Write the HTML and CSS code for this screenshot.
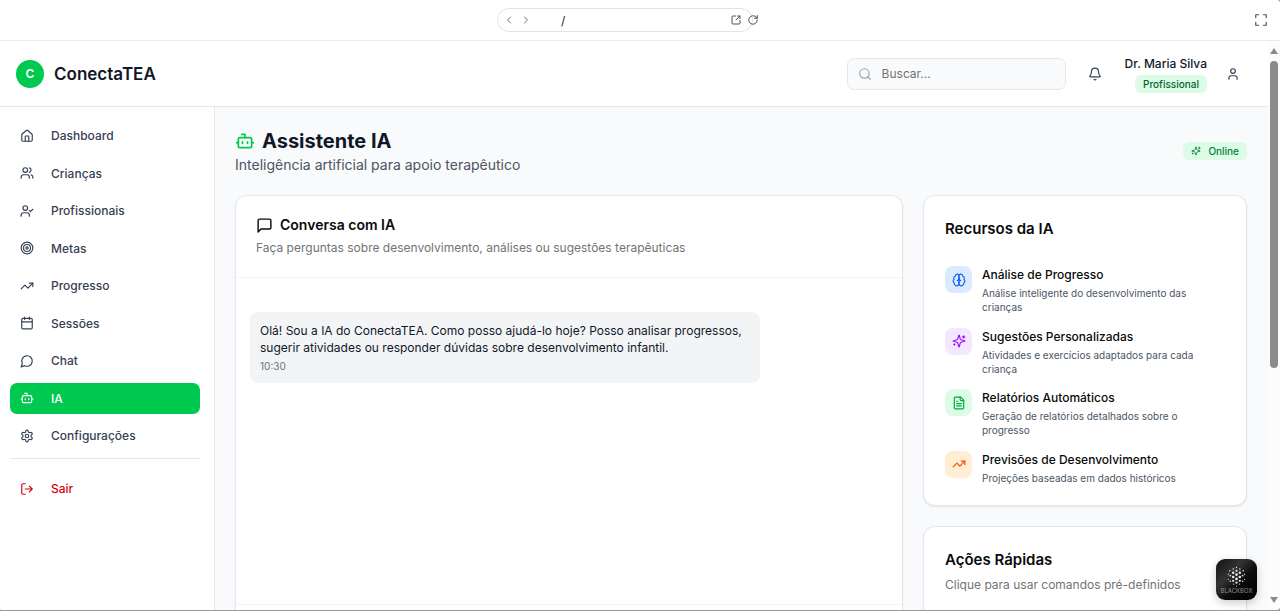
FILE: index.html
```html
<!DOCTYPE html>
<html lang="pt-BR">
<head>
<meta charset="utf-8">
<meta name="viewport" content="width=device-width, initial-scale=1">
<title>ConectaTEA - Assistente IA</title>
<link rel="stylesheet" href="styles.css">
</head>
<body>
<svg class="sprite" aria-hidden="true">
  <symbol id="bot" viewBox="0 0 24 24"><path d="M12 8V4H8"/><rect width="16" height="12" x="4" y="8" rx="2"/><path d="M2 14h2M20 14h2M15 13v2M9 13v2"/></symbol>
  <symbol id="sparkles" viewBox="0 0 24 24"><path d="M9.937 15.5A2 2 0 0 0 8.5 14.063l-6.135-1.582a.5.5 0 0 1 0-.962L8.5 9.936A2 2 0 0 0 9.937 8.5l1.582-6.135a.5.5 0 0 1 .963 0L14.063 8.5A2 2 0 0 0 15.5 9.937l6.135 1.581a.5.5 0 0 1 0 .964L15.5 14.063a2 2 0 0 0-1.437 1.437l-1.582 6.135a.5.5 0 0 1-.963 0z"/><path d="M20 3v4M22 5h-4M4 17v2M5 18H3"/></symbol>
  <symbol id="trend" viewBox="0 0 24 24"><path d="M16 7h6v6"/><path d="m22 7-8.5 8.5-5-5L2 17"/></symbol>
</svg>
<div class="window">
  <div class="toolbar">
    <div class="address">
      <button class="tool faint" aria-label="Voltar"><svg class="icon" viewBox="0 0 24 24"><path d="m15 18-6-6 6-6"/></svg></button>
      <button class="tool faint" aria-label="Avançar"><svg class="icon" viewBox="0 0 24 24"><path d="m9 18 6-6-6-6"/></svg></button>
      <input class="path" type="text" value="/" aria-label="Endereço">
      <button class="tool" aria-label="Abrir em nova aba"><svg class="icon" viewBox="0 0 24 24"><path d="M11 4H6a2 2 0 0 0-2 2v12a2 2 0 0 0 2 2h12a2 2 0 0 0 2-2v-5M15 4h5v5M20 4l-8 8"/></svg></button>
      <button class="tool" aria-label="Recarregar"><svg class="icon" viewBox="0 0 24 24"><path d="M20.500 12a8.500 8.500 0 1 1-2.500-6l2.500 2.500"/><path d="M20.500 3v5.500H15"/></svg></button>
    </div>
    <button class="tool expand" aria-label="Tela cheia"><svg class="icon" viewBox="0 0 24 24"><path d="M3 8V3h5M16 3h5v5M21 16v5h-5M8 21H3v-5"/></svg></button>
  </div>
  <div class="viewport">
    <div class="app">
      <header class="header">
        <div class="brand"><span class="brand-mark">C</span><span class="brand-name">ConectaTEA</span></div>
        <div class="header-tools">
          <label class="search">
            <svg class="icon" viewBox="0 0 24 24" aria-hidden="true"><circle cx="11" cy="11" r="8"/><path d="m21 21-4.300-4.300"/></svg>
            <input type="text" placeholder="Buscar..." aria-label="Buscar">
          </label>
          <button class="icon-button" aria-label="Notificações"><svg class="icon" viewBox="0 0 24 24"><path d="M10.268 21a2 2 0 0 0 3.464 0"/><path d="M3.262 15.326A1 1 0 0 0 4 17h16a1 1 0 0 0 .740-1.673C19.410 13.956 18 12.499 18 8A6 6 0 0 0 6 8c0 4.499-1.411 5.956-2.738 7.326"/></svg></button>
          <div class="user">
            <div class="user-info"><span class="user-name">Dr. Maria Silva</span><span class="badge">Profissional</span></div>
            <button class="icon-button" aria-label="Perfil"><svg class="icon" viewBox="0 0 24 24"><path d="M19 21v-2a4 4 0 0 0-4-4H9a4 4 0 0 0-4 4v2"/><circle cx="12" cy="7" r="4"/></svg></button>
          </div>
        </div>
      </header>
      <div class="body">
        <nav class="sidebar" aria-label="Principal">
          <ul class="nav">
            <li><a class="nav-link" href="#"><svg class="icon" viewBox="0 0 24 24"><path d="M15 21v-8a1 1 0 0 0-1-1h-4a1 1 0 0 0-1 1v8"/><path d="M3 10a2 2 0 0 1 .709-1.528l7-5.999a2 2 0 0 1 2.582 0l7 5.999A2 2 0 0 1 21 10v9a2 2 0 0 1-2 2H5a2 2 0 0 1-2-2z"/></svg>Dashboard</a></li>
            <li><a class="nav-link" href="#"><svg class="icon" viewBox="0 0 24 24"><path d="M16 21v-2a4 4 0 0 0-4-4H6a4 4 0 0 0-4 4v2"/><circle cx="9" cy="7" r="4"/><path d="M22 21v-2a4 4 0 0 0-3-3.870M16 3.130a4 4 0 0 1 0 7.750"/></svg>Crianças</a></li>
            <li><a class="nav-link" href="#"><svg class="icon" viewBox="0 0 24 24"><path d="m16 11 2 2 4-4M16 21v-2a4 4 0 0 0-4-4H6a4 4 0 0 0-4 4v2"/><circle cx="9" cy="7" r="4"/></svg>Profissionais</a></li>
            <li><a class="nav-link" href="#"><svg class="icon" viewBox="0 0 24 24"><circle cx="12" cy="12" r="10"/><circle cx="12" cy="12" r="6"/><circle cx="12" cy="12" r="2"/></svg>Metas</a></li>
            <li><a class="nav-link" href="#"><svg class="icon"><use href="#trend"/></svg>Progresso</a></li>
            <li><a class="nav-link" href="#"><svg class="icon" viewBox="0 0 24 24"><path d="M8 2v4M16 2v4M3 10h18"/><rect width="18" height="18" x="3" y="4" rx="2"/></svg>Sessões</a></li>
            <li><a class="nav-link" href="#"><svg class="icon" viewBox="0 0 24 24"><path d="M7.900 20A9 9 0 1 0 4 16.100L2 22Z"/></svg>Chat</a></li>
            <li><a class="nav-link active" href="#" aria-current="page"><svg class="icon"><use href="#bot"/></svg>IA</a></li>
            <li><a class="nav-link" href="#"><svg class="icon" viewBox="0 0 24 24"><path d="M12.220 2h-.440a2 2 0 0 0-2 2v.180a2 2 0 0 1-1 1.730l-.430.250a2 2 0 0 1-2 0l-.150-.080a2 2 0 0 0-2.730.730l-.220.380a2 2 0 0 0 .730 2.730l.150.100a2 2 0 0 1 1 1.720v.510a2 2 0 0 1-1 1.740l-.150.090a2 2 0 0 0-.730 2.730l.220.380a2 2 0 0 0 2.730.730l.150-.080a2 2 0 0 1 2 0l.430.250a2 2 0 0 1 1 1.730V20a2 2 0 0 0 2 2h.440a2 2 0 0 0 2-2v-.180a2 2 0 0 1 1-1.730l.430-.250a2 2 0 0 1 2 0l.150.080a2 2 0 0 0 2.730-.730l.220-.390a2 2 0 0 0-.730-2.730l-.150-.080a2 2 0 0 1-1-1.740v-.500a2 2 0 0 1 1-1.740l.150-.090a2 2 0 0 0 .730-2.730l-.220-.380a2 2 0 0 0-2.730-.730l-.150.080a2 2 0 0 1-2 0l-.430-.250a2 2 0 0 1-1-1.730V4a2 2 0 0 0-2-2z"/><circle cx="12" cy="12" r="3"/></svg>Configurações</a></li>
          </ul>
          <div class="nav-footer">
            <button class="nav-link logout"><svg class="icon" viewBox="0 0 24 24"><path d="M9 21H5a2 2 0 0 1-2-2V5a2 2 0 0 1 2-2h4M16 17l5-5-5-5M21 12H9"/></svg>Sair</button>
          </div>
        </nav>
        <main class="main">
          <div class="page-head">
            <div>
              <h1 class="page-title"><svg class="icon"><use href="#bot"/></svg>Assistente IA</h1>
              <p class="page-subtitle">Inteligência artificial para apoio terapêutico</p>
            </div>
            <span class="badge online"><svg class="icon"><use href="#sparkles"/></svg>Online</span>
          </div>
          <div class="columns">
            <section class="card chat">
              <div class="chat-head">
                <h2 class="chat-title"><svg class="icon" viewBox="0 0 24 24"><path d="M21 15a2 2 0 0 1-2 2H7l-4 4V5a2 2 0 0 1 2-2h14a2 2 0 0 1 2 2z"/></svg>Conversa com IA</h2>
                <p class="chat-desc">Faça perguntas sobre desenvolvimento, análises ou sugestões terapêuticas</p>
              </div>
              <div class="messages">
                <div class="message">
                  <p class="message-text">Olá! Sou a IA do ConectaTEA. Como posso ajudá-lo hoje? Posso analisar progressos, sugerir atividades ou responder dúvidas sobre desenvolvimento infantil.</p>
                  <time class="message-time">10:30</time>
                </div>
              </div>
              <div class="composer"></div>
            </section>
            <div class="side">
              <section class="card side-card">
                <h2 class="card-title">Recursos da IA</h2>
                <ul class="features">
                  <li class="feature"><span class="tile blue"><svg class="icon" viewBox="0 0 24 24"><path d="M12 5a3 3 0 1 0-5.997.125 4 4 0 0 0-2.526 5.770 4 4 0 0 0 .556 6.588A4 4 0 1 0 12 18Z"/><path d="M12 5a3 3 0 1 1 5.997.125 4 4 0 0 1 2.526 5.770 4 4 0 0 1-.556 6.588A4 4 0 1 1 12 18Z"/><path d="M15 13a4.500 4.500 0 0 1-3-4 4.500 4.500 0 0 1-3 4"/></svg></span><div><h3 class="feature-title">Análise de Progresso</h3><p class="feature-text">Análise inteligente do desenvolvimento das crianças</p></div></li>
                  <li class="feature"><span class="tile purple"><svg class="icon"><use href="#sparkles"/></svg></span><div><h3 class="feature-title">Sugestões Personalizadas</h3><p class="feature-text">Atividades e exercícios adaptados para cada criança</p></div></li>
                  <li class="feature"><span class="tile green"><svg class="icon" viewBox="0 0 24 24"><path d="M15 2H6a2 2 0 0 0-2 2v16a2 2 0 0 0 2 2h12a2 2 0 0 0 2-2V7Z"/><path d="M14 2v4a2 2 0 0 0 2 2h4M10 9H8M16 13H8M16 17H8"/></svg></span><div><h3 class="feature-title">Relatórios Automáticos</h3><p class="feature-text">Geração de relatórios detalhados sobre o progresso</p></div></li>
                  <li class="feature"><span class="tile orange"><svg class="icon"><use href="#trend"/></svg></span><div><h3 class="feature-title">Previsões de Desenvolvimento</h3><p class="feature-text">Projeções baseadas em dados históricos</p></div></li>
                </ul>
              </section>
              <section class="card side-card">
                <h2 class="card-title">Ações Rápidas</h2>
                <p class="card-desc">Clique para usar comandos pré-definidos</p>
              </section>
            </div>
          </div>
        </main>
      </div>
    </div>
    <div class="scrollbar" aria-hidden="true">
      <svg class="arrow" viewBox="0 0 10 8"><path d="M5 1 9 7H1z"/></svg>
      <div class="track"><div class="thumb"></div></div>
      <svg class="arrow" viewBox="0 0 10 8"><path d="M5 7 1 1h8z"/></svg>
    </div>
    <button class="blackbox">
      <svg class="dots" viewBox="0 0 20 22" aria-hidden="true">
        <g><circle cx="10" cy="1.500" r=".7"/><circle cx="6.500" cy="3" r=".8"/><circle cx="13.500" cy="3" r=".8"/><circle cx="3" cy="5" r=".8"/><circle cx="10" cy="5" r="1.200"/><circle cx="17" cy="5" r=".8"/><circle cx="6.500" cy="7" r="1.300"/><circle cx="13.500" cy="7" r="1.300"/><circle cx="1.500" cy="8.500" r=".6"/><circle cx="10" cy="9" r="1.500"/><circle cx="18.500" cy="8.500" r=".6"/><circle cx="3.500" cy="10" r=".9"/><circle cx="16.500" cy="10" r=".9"/><circle cx="6.500" cy="11.500" r="1.400"/><circle cx="13.500" cy="11.500" r="1.400"/><circle cx="10" cy="13.500" r="1.500"/><circle cx="1.500" cy="14" r=".6"/><circle cx="18.500" cy="14" r=".6"/><circle cx="3.500" cy="16" r=".8"/><circle cx="16.500" cy="16" r=".8"/><circle cx="6.500" cy="15.500" r="1.200"/><circle cx="13.500" cy="15.500" r="1.200"/><circle cx="10" cy="17.500" r="1.200"/><circle cx="7" cy="19" r=".7"/><circle cx="13" cy="19" r=".7"/><circle cx="10" cy="21" r=".6"/></g>
      </svg>
      <span>BLACKBOX</span>
    </button>
  </div>
</div>
</body>
</html>
```
FILE: styles.css
```css
* { box-sizing: border-box; }
body {
  margin: 0;
  height: 100vh;
  padding-bottom: 1px;
  background: #9b9b9b;
  font-family: Inter, "Liberation Sans", sans-serif;
  font-size: 12px;
  color: #0a0a0a;
}
h1, h2, h3, p, ul { margin: 0; padding: 0; font-weight: 400; }
ul { list-style: none; }
button { font: inherit; border: 0; padding: 0; background: none; color: inherit; cursor: pointer; }
a { color: inherit; text-decoration: none; }
.sprite { position: absolute; width: 0; height: 0; }
.icon {
  width: 14px;
  height: 14px;
  flex: none;
  fill: none;
  stroke: currentColor;
  stroke-width: 2;
  stroke-linecap: round;
  stroke-linejoin: round;
}

.window {
  height: 100%;
  display: flex;
  flex-direction: column;
  overflow: hidden;
  background: #fff;
  border-radius: 0 3px 4px 2px;
}
.toolbar {
  flex: none;
  height: 41px;
  display: flex;
  gap: 4px;
  align-items: center;
  padding-right: 12px;
  border-bottom: 1px solid #ebebec;
}
.address {
  width: 256px;
  height: 24px;
  display: flex;
  align-items: center;
  gap: 5px;
  margin: 0 auto;
  padding-left: 5px;
  border: 1px solid #e4e4e7;
  border-radius: 12px;
}
.tool { display: flex; flex: none; color: #52525b; }
.tool .icon { width: 12px; height: 12px; }
.tool.faint { color: #71717a; }
.path {
  flex: 0 0 188px;
  min-width: 0;
  padding: 0 0 0 24px;
  border: 0;
  background: none;
  font: 12px Inter, sans-serif;
  color: #27272a;
}
.tool.expand .icon { width: 14px; height: 14px; }

.viewport { flex: 1; min-height: 0; display: flex; position: relative; }
.app { flex: 1; min-width: 0; display: flex; flex-direction: column; overflow: hidden; background: #f9fafb; }
.scrollbar {
  width: 12px;
  flex: none;
  display: flex;
  flex-direction: column;
  align-items: center;
  gap: 6px;
  padding: 6px 0;
  background: #fcfcfc;
}
.arrow { width: 10px; height: 8px; fill: #8b8b8b; }
.track { flex: 1; width: 8px; }
.thumb { height: 58%; border-radius: 4px; background: #8b8b8b; }

.header {
  flex: none;
  height: 66px;
  display: flex;
  align-items: center;
  justify-content: space-between;
  padding: 0 20px 0 16px;
  background: #fff;
  border-bottom: 1px solid #e5e7eb;
}
.brand { display: flex; align-items: center; gap: 10px; }
.brand-mark {
  width: 28px;
  height: 28px;
  display: grid;
  place-items: center;
  border-radius: 50%;
  background: #00c950;
  color: #fff;
  font-weight: 600;
}
.brand-name { font-size: 17px; font-weight: 600; color: #101828; }
.header-tools { display: flex; align-items: center; gap: 14px; }
.search {
  width: 219px;
  height: 32px;
  display: flex;
  align-items: center;
  gap: 10px;
  padding: 0 10px;
  border: 1px solid #e5e7eb;
  border-radius: 7px;
  background: #f9fafb;
  color: #99a1af;
}
.search input { flex: 1; min-width: 0; border: 0; padding: 0; outline: 0; background: none; font: 12px Inter, sans-serif; }
.search input::placeholder { color: #737373; }
.icon-button { width: 31px; height: 31px; display: grid; place-items: center; color: #364153; }
.user { display: flex; align-items: center; gap: 10px; }
.user-info { display: flex; flex-direction: column; align-items: flex-end; gap: 2px; }
.user-name { font-weight: 500; line-height: 18px; color: #101828; }
.badge {
  display: inline-flex;
  align-items: center;
  gap: 7px;
  padding: 0 8px;
  border-radius: 6px;
  background: #dcfce7;
  color: #016630;
  font-size: 10px;
  font-weight: 500;
  line-height: 18px;
}
.badge .icon { width: 10px; height: 10px; }
.badge.online { color: #008236; }

.body { flex: 1; min-height: 0; display: flex; }
.sidebar { width: 215px; flex: none; padding: 13px 14px 0 10px; background: #fff; border-right: 1px solid #e5e7eb; }
.nav { height: 331px; display: flex; flex-direction: column; justify-content: space-between; }
.nav-link {
  width: 100%;
  height: 31px;
  display: flex;
  align-items: center;
  gap: 17px;
  padding: 0 10px;
  border-radius: 7px;
  font-weight: 500;
  color: #364153;
}
.nav-link.active { background: #00c950; color: #fff; }
.nav-footer { margin-top: 7px; padding-top: 14px; border-top: 1px solid #e5e7eb; }
.nav-link.logout { color: #d8000f; }

.main { flex: 1; min-width: 0; display: flex; flex-direction: column; gap: 20px; padding: 20px 21px 0 20px; overflow: hidden; }
.page-head { display: flex; align-items: center; justify-content: space-between; }
.page-title { display: flex; align-items: center; gap: 7px; font-size: 20px; font-weight: 700; line-height: 28px; color: #101828; }
.page-title .icon { width: 20px; height: 20px; color: #00c950; }
.page-subtitle { font-size: 14px; line-height: 20px; color: #4a5565; }

.columns { display: grid; grid-template-columns: repeat(3, minmax(0, 1fr)); gap: 20px; align-items: start; }
.card {
  background: #fff;
  border: 1px solid #e5e7eb;
  border-radius: 12px;
  box-shadow: 0 1px 2px rgba(0, 0, 0, .1);
}
.chat { grid-column: span 2; }
.chat-head { padding: 19px 20px 20px; border-bottom: 1px solid #f3f4f6; }
.chat-title { display: flex; align-items: center; gap: 7px; font-size: 14px; font-weight: 600; line-height: 20px; }
.chat-title .icon { width: 17px; height: 17px; }
.chat-desc { margin-top: 4px; line-height: 18px; color: #737373; }
.messages { height: 326px; padding: 34px 14px 0; }
.message { max-width: 80%; padding: 10px; border-radius: 8px; background: #f3f4f6; color: #101828; }
.message-text { line-height: 17px; }
.message-time { display: block; margin-top: 3px; font-size: 10px; line-height: 14px; color: #6a7282; }
.composer { height: 60px; border-top: 1px solid #f3f4f6; }

.side { display: flex; flex-direction: column; gap: 20px; }
.side-card { padding: 20px 21px; }
.card-title { font-size: 15px; font-weight: 600; line-height: 25px; }
.card-desc { font-size: 12px; line-height: 26px; color: #737373; }
.features { height: 219px; display: flex; flex-direction: column; justify-content: space-between; margin-top: 25px; }
.feature { display: flex; align-items: flex-start; gap: 10px; }
.tile { width: 27px; height: 27px; flex: none; display: grid; place-items: center; border-radius: 8px; }
.blue { background: #dbeafe; color: #155dfc; }
.purple { background: #f3e8ff; color: #9810fa; }
.green { background: #dcfce7; color: #00a63e; }
.orange { background: #ffedd4; color: #f54900; }
.feature-title { font-size: 12px; font-weight: 500; line-height: 18px; }
.feature-text { margin-top: 2px; font-size: 10px; line-height: 14px; color: #4a5565; }

.blackbox {
  position: absolute;
  right: 23px;
  bottom: 10px;
  width: 41px;
  height: 41px;
  display: flex;
  flex-direction: column;
  align-items: center;
  justify-content: center;
  border-radius: 9px;
  background: linear-gradient(135deg, #111 0%, #333 35%, #0a0a0a 60%, #000 100%);
  box-shadow: 0 3px 8px rgba(0, 0, 0, .2);
  color: #8f8f8f;
  font-size: 6px;
  line-height: 7px;
}
.dots { width: 19px; height: 21px; fill: #e4e4e4; }
```
